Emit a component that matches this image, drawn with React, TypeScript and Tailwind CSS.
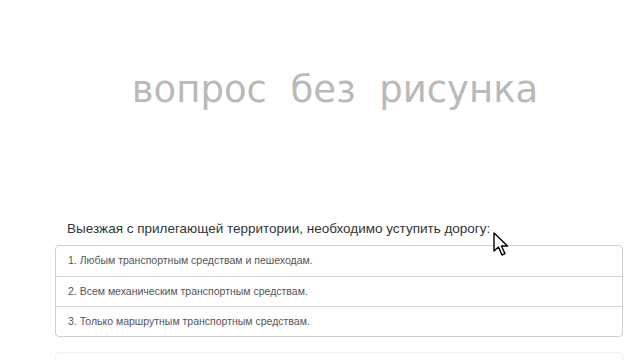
import React from 'react';

const answers = [
  '1. Любым транспортным средствам и пешеходам.',
  '2. Всем механическим транспортным средствам.',
  '3. Только маршрутным транспортным средствам.',
];

function Cursor() {
  return (
    <svg className="absolute left-[493px] top-[232px]" width="18" height="26" viewBox="0 0 18 26">
      <path
        d="M1 1 L1 19 L5.5 15 L9 23 L12 21.7 L8.5 14 L14.5 14 Z"
        fill="#fff"
        stroke="#000"
        strokeWidth="1.4"
        strokeLinejoin="round"
      />
    </svg>
  );
}

export default function App() {
  return (
    <div className="relative w-[640px] h-[360px] overflow-hidden bg-white font-['Liberation_Sans',Arial,sans-serif]">
      <div className="ml-[55px] w-[568px]">
        <div className="h-[207px] pt-[66px] pr-[8px] flex justify-center">
          <div className="text-[37px] leading-[48px] text-[#b9b9b9] font-['DejaVu_Sans',sans-serif] whitespace-pre">
            вопрос  без  рисунка
          </div>
        </div>
        <div className="px-[12px] pt-[12px] pb-[6px] text-[13.5px] leading-[20px] text-[#333]">
          Выезжая с прилегающей территории, необходимо уступить дорогу:
        </div>
        <div className="border border-[#cfcfcf] rounded-[4px]">
          {answers.map((a, i) => (
            <div
              key={a}
              className={`h-[30px] flex items-center px-[12px] text-[10.5px] text-[#555] ${i > 0 ? 'border-t border-[#d6d6d6]' : ''}`}
            >
              {a}
            </div>
          ))}
        </div>
        <div className="mt-[15px] h-[40px] border border-[#f0f0f0] rounded-[4px]" />
      </div>
      <Cursor />
    </div>
  );
}
